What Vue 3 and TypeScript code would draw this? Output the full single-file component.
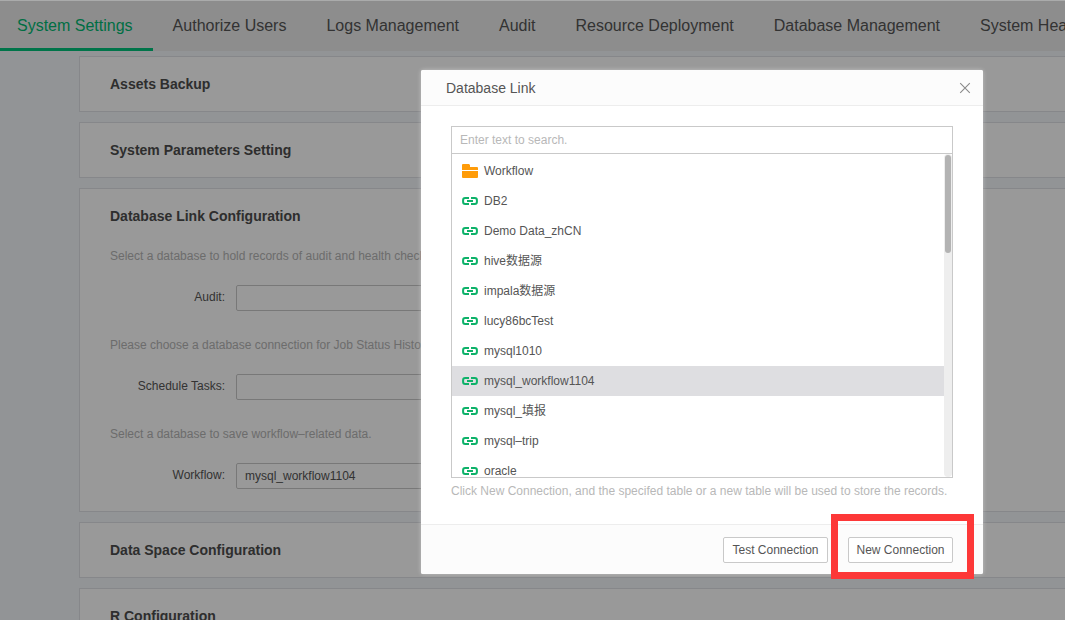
<script setup lang="ts">
import { ref } from 'vue'

interface Field {
  id: string
  hint: string
  label: string
  value: string
}

interface Item {
  name: string
  kind: 'folder' | 'link'
}

const tabs = [
  'System Settings',
  'Authorize Users',
  'Logs Management',
  'Audit',
  'Resource Deployment',
  'Database Management',
  'System Health',
]
const activeTab = ref('System Settings')

const fields = ref<Field[]>([
  { id: 'audit', hint: 'Select a database to hold records of audit and health check.', label: 'Audit:', value: '' },
  { id: 'schedule', hint: 'Please choose a database connection for Job Status History.', label: 'Schedule Tasks:', value: '' },
  { id: 'workflow', hint: 'Select a database to save workflow–related data.', label: 'Workflow:', value: 'mysql_workflow1104' },
])

const items: Item[] = [
  { name: 'Workflow', kind: 'folder' },
  { name: 'DB2', kind: 'link' },
  { name: 'Demo Data_zhCN', kind: 'link' },
  { name: 'hive数据源', kind: 'link' },
  { name: 'impala数据源', kind: 'link' },
  { name: 'lucy86bcTest', kind: 'link' },
  { name: 'mysql1010', kind: 'link' },
  { name: 'mysql_workflow1104', kind: 'link' },
  { name: 'mysql_填报', kind: 'link' },
  { name: 'mysql–trip', kind: 'link' },
  { name: 'oracle', kind: 'link' },
]
const selected = ref('mysql_workflow1104')
const query = ref('')
</script>

<template>
  <div class="page">
    <nav class="tabs">
      <a
        v-for="tab in tabs"
        :key="tab"
        href="#"
        class="tab"
        :class="{ active: tab === activeTab }"
        @click.prevent="activeTab = tab"
      >{{ tab }}</a>
    </nav>

    <main class="content">
      <section class="card"><h2>Assets Backup</h2></section>
      <section class="card"><h2>System Parameters Setting</h2></section>
      <section class="card">
        <h2>Database Link Configuration</h2>
        <div v-for="field in fields" :key="field.id" class="group">
          <p class="hint">{{ field.hint }}</p>
          <div class="field">
            <label :for="field.id">{{ field.label }}</label>
            <input :id="field.id" v-model="field.value" type="text" />
          </div>
        </div>
      </section>
      <section class="card"><h2>Data Space Configuration</h2></section>
      <section class="card"><h2>R Configuration</h2></section>
    </main>

    <div class="overlay">
      <div class="dialog" role="dialog" aria-labelledby="dialog-title">
        <header class="dialog-head">
          <h1 id="dialog-title">Database Link</h1>
          <button type="button" class="close" aria-label="Close">
            <svg width="12" height="12" viewBox="0 0 12 12" fill="none" stroke="#8a8a8a" stroke-width="1.1">
              <path d="M1.2 1.2L10.8 10.8M10.8 1.2L1.2 10.8" />
            </svg>
          </button>
        </header>

        <div class="dialog-body">
          <input v-model="query" class="search" type="text" placeholder="Enter text to search." aria-label="Search" />
          <div class="list">
            <ul class="rows">
              <li v-for="item in items" :key="item.name">
                <button
                  type="button"
                  class="row"
                  :class="{ selected: item.name === selected }"
                  @click="selected = item.name"
                >
                  <svg v-if="item.kind === 'folder'" width="16" height="14" viewBox="0 0 16 14" fill="#ff9c09">
                    <path d="M0 6V1Q0 0 1 0H7L8 1V3H15Q16 3 16 4V6Z" />
                    <path d="M0 7H16V13Q16 14 15 14H1Q0 14 0 13Z" />
                  </svg>
                  <svg v-else width="16" height="8" viewBox="0 0 16 8" fill="none" stroke="#0db269" stroke-width="2">
                    <path d="M7 1H3.2Q1.1 1 1.1 3V5Q1.1 7 3.2 7H7M9 1H12.8Q14.9 1 14.9 3V5Q14.9 7 12.8 7H9M5 4H11" />
                  </svg>
                  <span>{{ item.name }}</span>
                </button>
              </li>
            </ul>
            <div class="track"><div class="thumb"></div></div>
          </div>
          <p class="note">Click New Connection, and the specifed table or a new table will be used to store the records.</p>
        </div>

        <footer class="dialog-foot">
          <button type="button" class="action">Test Connection</button>
          <div class="marked">
            <button type="button" class="action">New Connection</button>
          </div>
        </footer>
      </div>
    </div>
  </div>
</template>

<style>
body {
  margin: 0;
}
</style>

<style scoped>
.page {
  position: relative;
  height: 100vh;
  overflow: hidden;
  box-sizing: border-box;
  border-top: 1px solid #aaabab;
  background: #f4f7fa;
  color: #555;
  font: 12px/16px "Liberation Sans", "Noto Sans CJK SC", sans-serif;
}

.page * {
  box-sizing: border-box;
}

h1,
h2,
p,
ul {
  margin: 0;
  padding: 0;
}

button,
input {
  font: inherit;
  color: inherit;
}

.tabs {
  display: flex;
  height: 50px;
  margin-left: -3px;
  background: #ebebeb;
  overflow: hidden;
}

.tab {
  flex: none;
  padding: 0 20px;
  border-bottom: 3px solid transparent;
  color: #555;
  font-size: 16px;
  line-height: 50px;
  text-decoration: none;
}

.tab.active {
  border-color: #00c27a;
  color: #00b871;
}

.content {
  display: flex;
  flex-direction: column;
  gap: 10px;
  padding: 5px 0 0 79px;
}

.card {
  padding: 18px 30px;
  border: 1px solid #dfe2e6;
  border-right: 0;
  background: #fff;
}

.card h2 {
  color: #4d4d4d;
  font-size: 14px;
  line-height: 18px;
}

.group {
  padding: 23px 0 3px;
}

.group:last-child {
  padding-bottom: 4px;
}

.group .hint {
  color: #b5b5b5;
}

.field {
  display: flex;
  gap: 11px;
  padding-top: 21px;
}

.field label {
  width: 115px;
  line-height: 24px;
  text-align: right;
}

.field input {
  width: 300px;
  height: 26px;
  padding: 0 8px;
  border: 1px solid #c9c9c9;
  border-radius: 2px;
  background: transparent;
}

.overlay {
  position: absolute;
  inset: 0;
  display: flex;
  align-items: flex-start;
  justify-content: flex-end;
  padding: 69px 82px 0 0;
  background: rgba(0, 0, 0, 0.4);
}

.dialog {
  width: 562px;
  border-radius: 2px;
  background: #fff;
  box-shadow: 0 0 4px rgba(255, 255, 255, 0.4);
}

.dialog-head {
  display: flex;
  align-items: center;
  justify-content: space-between;
  height: 36px;
  padding: 0 12px 0 25px;
  border-bottom: 1px solid #ededed;
  border-radius: 2px 2px 0 0;
  background: #fcfcfc;
}

.dialog-head h1 {
  font-size: 14px;
  font-weight: 400;
}

.close {
  display: flex;
  padding: 0;
  border: 0;
  background: none;
}

.dialog-body {
  padding: 20px 30px 25px;
}

.search {
  display: block;
  width: 100%;
  height: 28px;
  padding: 0 8px;
  border: 1px solid #c9c9c9;
  background: #fff;
}

.search::placeholder {
  color: #b8b8b8;
}

.list {
  display: flex;
  height: 324px;
  border: 1px solid #c9c9c9;
  border-top: 0;
  overflow: hidden;
}

.rows {
  flex: 1;
  padding-top: 2px;
  list-style: none;
}

.row {
  display: flex;
  align-items: center;
  gap: 6px;
  width: 100%;
  height: 30px;
  padding: 0 10px;
  border: 0;
  background: none;
  text-align: left;
}

.row.selected {
  background: #dedee1;
}

.track {
  width: 8px;
  padding: 1px;
  border-radius: 4px;
  background: #eee;
}

.thumb {
  height: 98px;
  border-radius: 3px;
  background: #b3b3b3;
}

.note {
  padding-top: 5px;
  color: #b8b8b8;
  white-space: nowrap;
}

.dialog-foot {
  display: flex;
  justify-content: flex-end;
  gap: 20px;
  padding: 12px 30px 11px;
  border-top: 1px solid #ededed;
  border-radius: 0 0 2px 2px;
  background: #fcfcfc;
}

.action {
  display: block;
  width: 105px;
  height: 26px;
  padding: 0;
  border: 1px solid #c9c9c9;
  border-radius: 2px;
  background: #fff;
  white-space: nowrap;
}

.marked {
  position: relative;
}

.marked::after {
  content: "";
  position: absolute;
  inset: -23px -21px -16px -17px;
  border: 7px solid #fd3838;
  pointer-events: none;
}
</style>
